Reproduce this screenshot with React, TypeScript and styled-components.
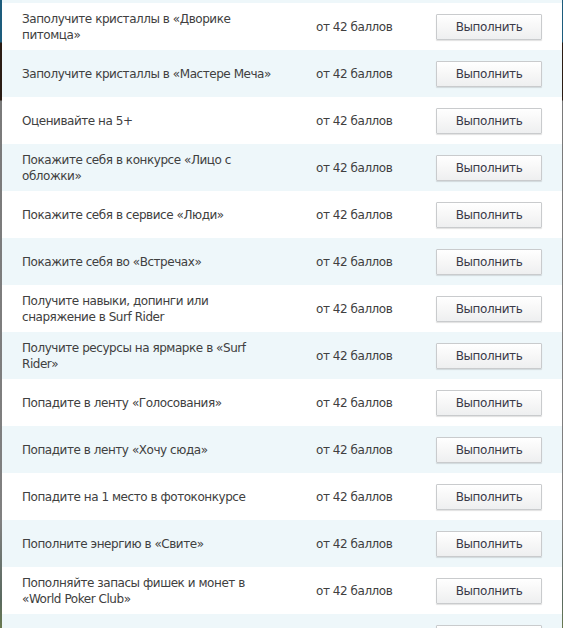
import React from "react";
import styled, { createGlobalStyle } from "styled-components";

const Global = createGlobalStyle`
  html, body { margin: 0; padding: 0; }
  body {
    width: 563px;
    height: 628px;
    overflow: hidden;
    background: linear-gradient(to bottom, #1d5c7c 0px, #1d5c7c 42px, #2a1c14 43px, #2a1c14 100px, #7a7a7a 101px, #808080 520px, #5a6a60 600px, #6a7a50 628px);
    font-family: "DejaVu Sans", Tahoma, sans-serif;
  }
`;

const Panel = styled.div`
  margin: 0 1px 0 2px;
  width: 560px;
  height: 628px;
  overflow: hidden;
  background: #eef7fa;
  padding-top: 3px;
  box-sizing: border-box;
`;

const Row = styled.div<{ $alt: boolean }>`
  display: grid;
  grid-template-columns: 294px 120px 106px;
  align-items: center;
  height: 47px;
  padding-left: 20px;
  box-sizing: border-box;
  background: ${(p) => (p.$alt ? "#eef7fa" : "#ffffff")};
`;

const Title = styled.div`
  font-size: 12px;
  letter-spacing: -0.45px;
  line-height: 16px;
  color: #404040;
  padding-right: 36px;
`;

const Points = styled.div`
  font-size: 12px;
  letter-spacing: -0.45px;
  color: #404040;
`;

const Button = styled.button`
  width: 106px;
  height: 26px;
  margin: 0;
  padding: 0;
  border: 1px solid #c9cbcd;
  border-radius: 1px;
  background: linear-gradient(to bottom, #ffffff 0%, #f7f7f7 50%, #eeeff0 100%);
  box-shadow: 0 1px 1px rgba(0, 0, 0, 0.12);
  font-family: "DejaVu Sans", Tahoma, sans-serif;
  font-size: 12px;
  letter-spacing: -0.4px;
  color: #3a3a48;
  cursor: pointer;
`;

const tasks = [
  "Заполучите кристаллы в «Дворике питомца»",
  "Заполучите кристаллы в «Мастере Меча»",
  "Оценивайте на 5+",
  "Покажите себя в конкурсе «Лицо с обложки»",
  "Покажите себя в сервисе «Люди»",
  "Покажите себя во «Встречах»",
  "Получите навыки, допинги или снаряжение в Surf Rider",
  "Получите ресурсы на ярмарке в «Surf Rider»",
  "Попадите в ленту «Голосования»",
  "Попадите в ленту «Хочу сюда»",
  "Попадите на 1 место в фотоконкурсе",
  "Пополните энергию в «Свите»",
  "Пополняйте запасы фишек и монет в «World Poker Club»",
  "Поставьте оценку",
];

export default function App() {
  return (
    <>
      <Global />
      <Panel>
        {tasks.map((t, i) => (
          <Row key={i} $alt={i % 2 === 1}>
            <Title>{t}</Title>
            <Points>от 42 баллов</Points>
            <Button>Выполнить</Button>
          </Row>
        ))}
      </Panel>
    </>
  );
}
